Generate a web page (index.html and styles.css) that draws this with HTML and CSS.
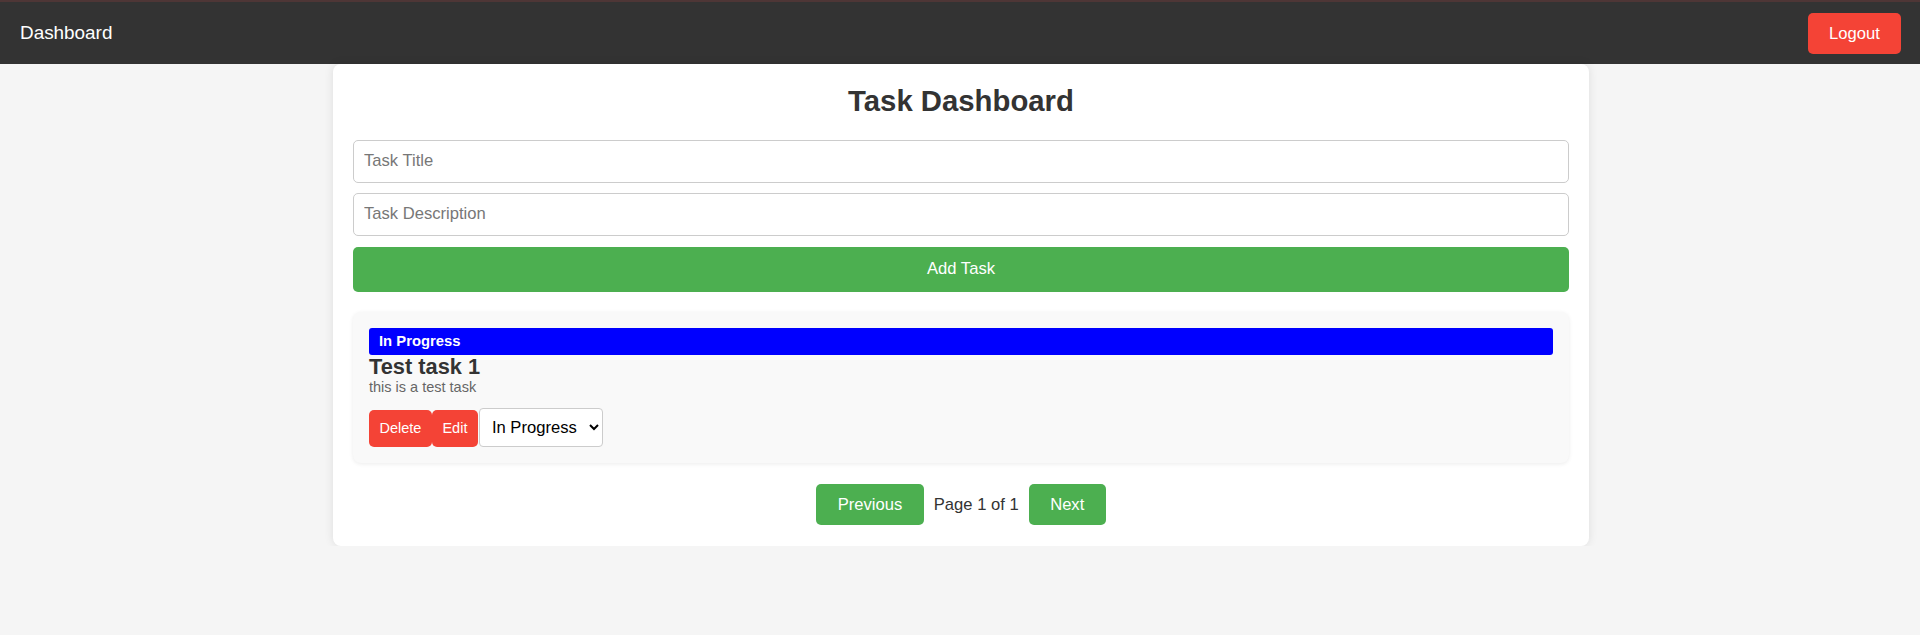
FILE: index.html
```html
<!DOCTYPE html>
<html lang="en">
<head>
<meta charset="utf-8">
<title>Dashboard</title>
<link rel="stylesheet" href="styles.css">
</head>
<body>
<nav class="navbar">
  <span class="brand">Dashboard</span>
  <button class="logout">Logout</button>
</nav>
<div class="page">
  <main class="card">
    <h2 class="title">Task Dashboard</h2>
    <form class="task-form">
      <input class="field" type="text" placeholder="Task Title">
      <input class="field" type="text" placeholder="Task Description">
      <button type="button" class="add-btn">Add Task</button>
    </form>
    <div class="task-list">
      <div class="task">
        <div class="status">In Progress</div>
        <h3 class="task-title">Test task 1</h3>
        <p class="task-desc">this is a test task</p>
        <div class="actions">
          <button class="act-btn">Delete</button>
          <button class="act-btn">Edit</button>
          <select class="status-select">
            <option>Pending</option>
            <option selected>In Progress</option>
            <option>Completed</option>
          </select>
        </div>
      </div>
    </div>
    <div class="pagination">
      <button class="page-btn">Previous</button>
      <span class="page-info">Page 1 of 1</span>
      <button class="page-btn">Next</button>
    </div>
  </main>
</div>
</body>
</html>
```
FILE: styles.css
```css
* { box-sizing: border-box; }

body {
  margin: 0;
  background: #f5f5f5;
  font-family: "Liberation Sans", Arial, sans-serif;
  color: #333;
}

.navbar {
  height: 64px;
  background: #333;
  border-top: 2px solid #4e3636;
  display: flex;
  align-items: center;
  justify-content: space-between;
  padding: 0 19px 0 20px;
}

.brand {
  color: #fff;
  font-size: 18.9px;
}

.logout {
  background: #f44336;
  color: #fff;
  border: none;
  border-radius: 5px;
  font-family: inherit;
  font-size: 16.6px;
  line-height: 19px;
  padding: 11px 0;
  width: 93px;
  height: 41px;
}

.page {
  padding-left: 2px;
}

.card {
  width: 1256px;
  margin: 0 auto;
  background: #fff;
  padding: 20px 20px 21px;
  border-radius: 8px;
  box-shadow: 0 0 10px rgba(0, 0, 0, 0.1);
}

.title {
  margin: 0 0 22.7px;
  text-align: center;
  font-size: 29.3px;
  line-height: 33px;
  font-weight: bold;
  color: #333;
}

.task-form {
  display: flex;
  flex-direction: column;
  gap: 10px;
}

.field {
  width: 100%;
  border: 1px solid #ccc;
  border-radius: 5px;
  padding: 11px 10px;
  font-family: inherit;
  font-size: 16.6px;
  line-height: 19px;
  height: 43px;
  color: #333;
  background: #fff;
}

.field::placeholder { color: #777; }

.add-btn {
  margin-top: 1px;
  width: 100%;
  height: 45px;
  background: #4caf50;
  color: #fff;
  border: none;
  border-radius: 5px;
  font-family: inherit;
  font-size: 16.6px;
}

.task-list {
  margin-top: 20px;
}

.task {
  background: #f9f9f9;
  border-radius: 8px;
  padding: 16px;
  box-shadow: 0 1px 4px rgba(0, 0, 0, 0.08);
}

.status {
  background: #0000ff;
  color: #fff;
  font-weight: bold;
  font-size: 14.8px;
  height: 27px;
  line-height: 27px;
  padding: 0 10px;
  border-radius: 3px;
}

.task-title {
  margin: 0;
  font-size: 21.8px;
  line-height: 24px;
  font-weight: bold;
  color: #333;
}

.task-desc {
  margin: 0;
  font-size: 14.5px;
  line-height: 16.6px;
  color: #666;
}

.actions {
  margin-top: 12.5px;
  display: flex;
  align-items: flex-end;
}

.act-btn {
  background: #f44336;
  color: #fff;
  border: none;
  border-radius: 5px;
  font-family: inherit;
  font-size: 14.5px;
  line-height: 17px;
  padding: 10px 10.5px;
  height: 37px;
}

.status-select {
  margin-left: 1px;
  height: 39px;
  width: 124px;
  font-family: inherit;
  font-size: 16.6px;
  color: #000;
  background: #fff;
  border: 1px solid #ccc;
  border-radius: 4px;
  padding: 0 8px;
}

.pagination {
  margin-top: 21.5px;
  display: flex;
  justify-content: center;
  align-items: center;
  gap: 10px;
}

.page-btn {
  background: #4caf50;
  color: #fff;
  border: none;
  border-radius: 5px;
  font-family: inherit;
  font-size: 16.6px;
  line-height: 19px;
  padding: 11px 21.5px;
  height: 41px;
}

.page-info {
  font-size: 16.6px;
  color: #333;
}
```
